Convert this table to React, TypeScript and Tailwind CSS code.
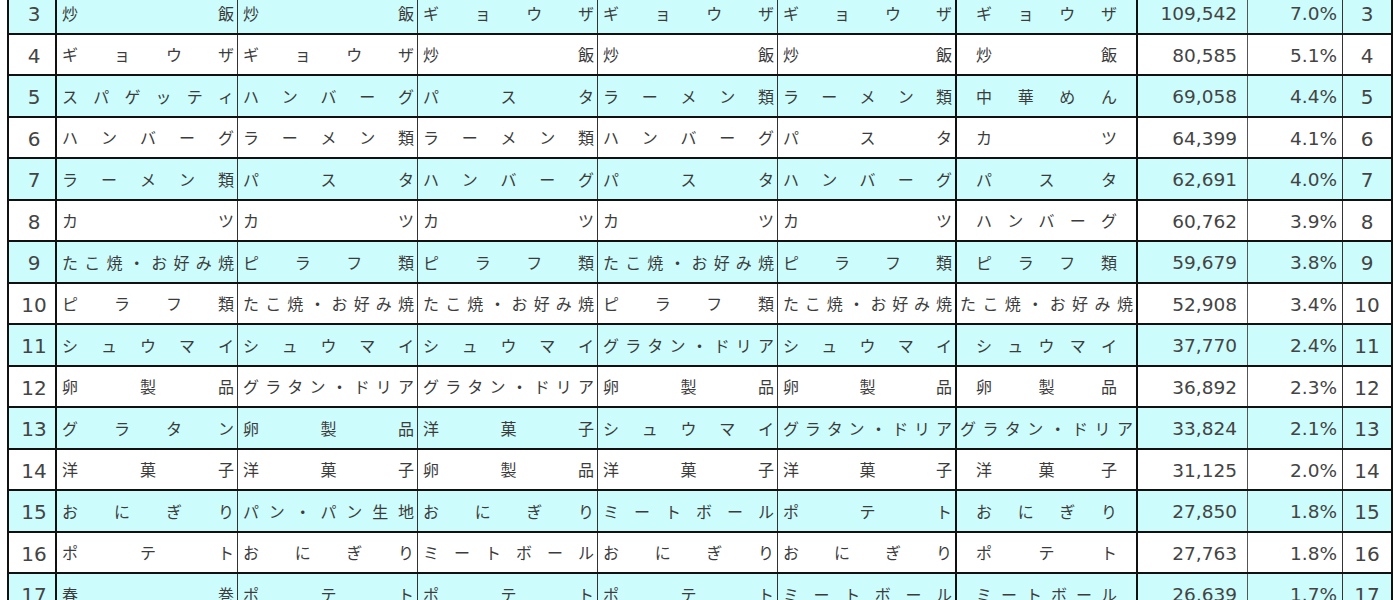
import React from 'react';

type Row = {
  rank: number;
  items: string[];
  count: string;
  pct: string;
};

const rows: Row[] = [
  { rank: 3, items: ['炒飯', '炒飯', 'ギョウザ', 'ギョウザ', 'ギョウザ', 'ギョウザ'], count: '109,542', pct: '7.0%' },
  { rank: 4, items: ['ギョウザ', 'ギョウザ', '炒飯', '炒飯', '炒飯', '炒飯'], count: '80,585', pct: '5.1%' },
  { rank: 5, items: ['スパゲッティ', 'ハンバーグ', 'パスタ', 'ラーメン類', 'ラーメン類', '中華めん'], count: '69,058', pct: '4.4%' },
  { rank: 6, items: ['ハンバーグ', 'ラーメン類', 'ラーメン類', 'ハンバーグ', 'パスタ', 'カツ'], count: '64,399', pct: '4.1%' },
  { rank: 7, items: ['ラーメン類', 'パスタ', 'ハンバーグ', 'パスタ', 'ハンバーグ', 'パスタ'], count: '62,691', pct: '4.0%' },
  { rank: 8, items: ['カツ', 'カツ', 'カツ', 'カツ', 'カツ', 'ハンバーグ'], count: '60,762', pct: '3.9%' },
  { rank: 9, items: ['たこ焼・お好み焼', 'ピラフ類', 'ピラフ類', 'たこ焼・お好み焼', 'ピラフ類', 'ピラフ類'], count: '59,679', pct: '3.8%' },
  { rank: 10, items: ['ピラフ類', 'たこ焼・お好み焼', 'たこ焼・お好み焼', 'ピラフ類', 'たこ焼・お好み焼', 'たこ焼・お好み焼'], count: '52,908', pct: '3.4%' },
  { rank: 11, items: ['シュウマイ', 'シュウマイ', 'シュウマイ', 'グラタン・ドリア', 'シュウマイ', 'シュウマイ'], count: '37,770', pct: '2.4%' },
  { rank: 12, items: ['卵製品', 'グラタン・ドリア', 'グラタン・ドリア', '卵製品', '卵製品', '卵製品'], count: '36,892', pct: '2.3%' },
  { rank: 13, items: ['グラタン', '卵製品', '洋菓子', 'シュウマイ', 'グラタン・ドリア', 'グラタン・ドリア'], count: '33,824', pct: '2.1%' },
  { rank: 14, items: ['洋菓子', '洋菓子', '卵製品', '洋菓子', '洋菓子', '洋菓子'], count: '31,125', pct: '2.0%' },
  { rank: 15, items: ['おにぎり', 'パン・パン生地', 'おにぎり', 'ミートボール', 'ポテト', 'おにぎり'], count: '27,850', pct: '1.8%' },
  { rank: 16, items: ['ポテト', 'おにぎり', 'ミートボール', 'おにぎり', 'おにぎり', 'ポテト'], count: '27,763', pct: '1.8%' },
  { rank: 17, items: ['春巻', 'ポテト', 'ポテト', 'ポテト', 'ミートボール', 'ミートボール'], count: '26,639', pct: '1.7%' },
];

// Excel-style "distributed" alignment: first char on the left, last on the right
const Spread: React.FC<{ text: string; last?: boolean }> = ({ text, last }) => {
  const chars = Array.from(text);
  const pad = last ? (chars.length >= 7 ? 'px-[3px]' : 'px-[19px]') : 'pl-[5px] pr-[3px]';
  return (
    <div className={`flex items-center justify-between h-full ${pad}`}>
      {chars.map((c, i) => (
        <span key={i}>{c}</span>
      ))}
    </div>
  );
};

const App: React.FC = () => {
  return (
    <div className="w-[1400px] h-[600px] overflow-hidden bg-white text-[#3c3c3c] font-['Noto_Sans_CJK_JP','Noto_Sans',sans-serif]">
      <div className="ml-[7px] -mt-[7px] w-[1386px] border-l-2 border-r-2 border-[#111]">
        {rows.map((r) => (
          <div
            key={r.rank}
            className={`grid grid-cols-[48px_181px_180px_180px_180px_179px_181px_110px_95px_48px] h-[41.5px] border-b-2 border-[#111] ${
              r.rank % 2 === 1 ? 'bg-[#ccfcfc]' : 'bg-white'
            }`}
          >
            <div className="flex items-center justify-center border-r-2 border-[#111] text-[20px] leading-none pl-[4px] pt-[3px] text-[#444] font-['DejaVu_Sans',sans-serif]">
              {r.rank}
            </div>
            {r.items.map((it, i) => (
              <div
                key={i}
                className={`text-[16px] leading-none ${
                  i === 4 || i === 5 ? 'border-r-2 border-[#111]' : 'border-r border-[#333]'
                }`}
              >
                <Spread text={it} last={i === 5} />
              </div>
            ))}
            <div className="flex items-center justify-end pr-[10px] pt-[3px] border-r border-[#555] text-[18.5px] leading-none text-[#444] font-['DejaVu_Sans',sans-serif]">
              {r.count}
            </div>
            <div className="flex items-center justify-end pr-[5px] pt-[3px] border-r border-[#333] text-[18.5px] leading-none text-[#444] font-['DejaVu_Sans',sans-serif]">
              {r.pct}
            </div>
            <div className="flex items-center justify-center pt-[3px] text-[20px] leading-none text-[#444] font-['DejaVu_Sans',sans-serif]">
              {r.rank}
            </div>
          </div>
        ))}
      </div>
    </div>
  );
};

export default App;
